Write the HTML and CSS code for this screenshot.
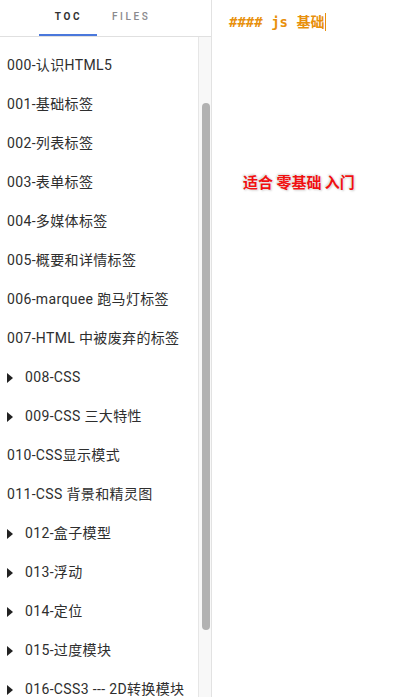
FILE: index.html
```html
<!DOCTYPE html>
<html>
<head>
<meta charset="utf-8">
<link rel="stylesheet" href="styles.css">
</head>
<body>
<div class="app">
  <aside class="sidebar">
    <div class="tabs">
      <div class="tab active">TOC</div>
      <div class="tab">FILES</div>
    </div>
    <div class="sidebody">
      <ul class="toc">
        <li class="item">000-认识HTML5</li>
        <li class="item">001-基础标签</li>
        <li class="item">002-列表标签</li>
        <li class="item">003-表单标签</li>
        <li class="item">004-多媒体标签</li>
        <li class="item">005-概要和详情标签</li>
        <li class="item">006-marquee 跑马灯标签</li>
        <li class="item">007-HTML 中被废弃的标签</li>
        <li class="item folder"><span class="arrow"></span>008-CSS</li>
        <li class="item folder"><span class="arrow"></span>009-CSS 三大特性</li>
        <li class="item">010-CSS显示模式</li>
        <li class="item">011-CSS 背景和精灵图</li>
        <li class="item folder"><span class="arrow"></span>012-盒子模型</li>
        <li class="item folder"><span class="arrow"></span>013-浮动</li>
        <li class="item folder"><span class="arrow"></span>014-定位</li>
        <li class="item folder"><span class="arrow"></span>015-过度模块</li>
        <li class="item folder"><span class="arrow"></span>016-CSS3 --- 2D转换模块</li>
      </ul>
      <div class="scrollbar"><div class="thumb"></div></div>
    </div>
  </aside>
  <main class="editor">
    <div class="line heading">#### js 基础<span class="cursor"></span></div>
    <div class="badge">适合 零基础 入门</div>
  </main>
</div>
</body>
</html>
```
FILE: styles.css
```css
html, body {
  margin: 0;
  padding: 0;
  height: 697px;
  overflow: hidden;
  background: #fff;
}
.app {
  display: flex;
  height: 697px;
}
.sidebar {
  width: 211px;
  border-right: 1px solid #e2e2e2;
  display: flex;
  flex-direction: column;
  flex-shrink: 0;
}
.tabs {
  height: 36px;
  border-bottom: 1px solid #e0e0e0;
  display: flex;
  padding-left: 39px;
  box-sizing: content-box;
}
.tab {
  font-family: Roboto, "Noto Sans", sans-serif;
  font-size: 10px;
  font-weight: 700;
  letter-spacing: 2.6px;
  color: #8a8a8e;
  height: 36px;
  line-height: 33px;
  box-sizing: border-box;
  text-align: center;
}
.tab.active {
  color: #333;
  width: 58px;
  padding-left: 1px;
  border-bottom: 2px solid #4a78dc;
}
.tab + .tab {
  margin-left: 15px;
  font-weight: 500;
}
.sidebody {
  flex: 1;
  display: flex;
  overflow: hidden;
}
.toc {
  list-style: none;
  margin: 0;
  padding: 9px 0 0 0;
  flex: 1;
  overflow: hidden;
  white-space: nowrap;
}
.item {
  height: 39px;
  line-height: 39px;
  padding-left: 7px;
  font-family: Roboto, "Noto Sans CJK SC", sans-serif;
  font-size: 14px;
  letter-spacing: 0.35px;
  color: #2e2e2e;
  display: flex;
  align-items: center;
}
.arrow {
  width: 0;
  height: 0;
  border-top: 5px solid transparent;
  border-bottom: 5px solid transparent;
  border-left: 6px solid #222;
  margin-right: 12px;
}
.scrollbar {
  width: 13px;
  border-left: 1px solid #e6e6e6;
  background: #f8f8f8;
  padding-left: 3px;
  box-sizing: border-box;
}
.thumb {
  width: 8px;
  height: 527px;
  margin-top: 66px;
  background: #b2b2b2;
  border-radius: 4px;
}
.editor {
  flex: 1;
  padding: 13px 0 0 17px;
}
.line {
  font-family: "DejaVu Sans Mono", "Noto Sans CJK SC", monospace;
  font-size: 14px;
  font-weight: 700;
  color: #e8900c;
  height: 18px;
  line-height: 18px;
  display: flex;
  align-items: center;
}
.cursor {
  width: 1px;
  height: 18px;
  background: #e8900c;
  margin-left: 1px;
}
.badge {
  margin: 142px 0 0 14px;
  font-family: "Noto Sans CJK SC", sans-serif;
  font-size: 15px;
  font-weight: 700;
  color: #f01010;
  line-height: 18px;
  text-shadow: 0 0 2px #fff, 0 0 1px #ddd, 1px 1px 2px #ccc, -1px -1px 2px #ccc;
}
```
